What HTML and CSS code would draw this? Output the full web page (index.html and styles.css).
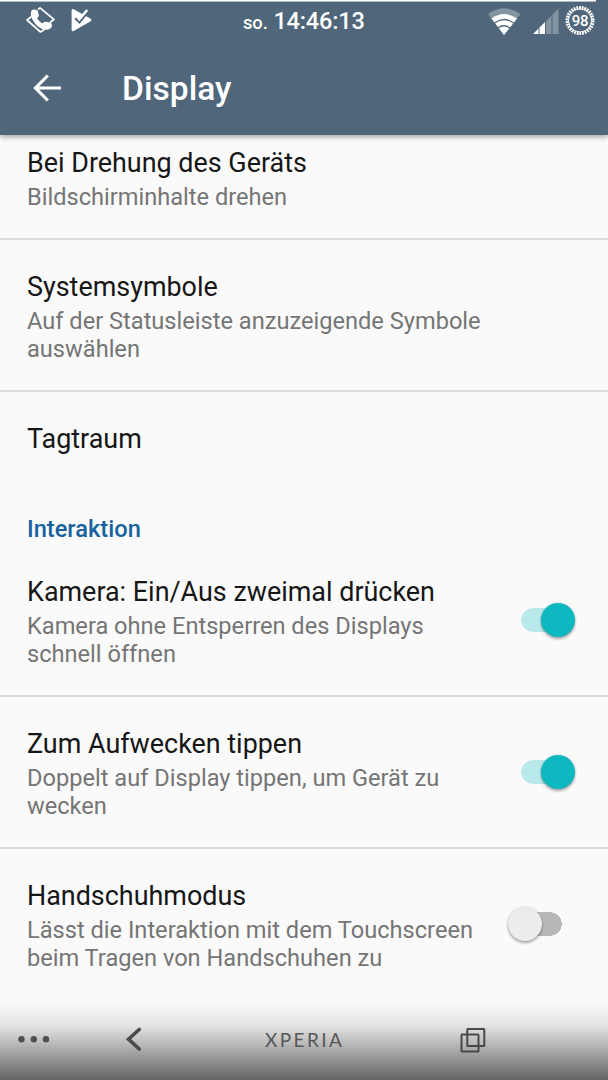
FILE: index.html
```html
<!DOCTYPE html>
<html lang="de">
<head>
<meta charset="utf-8">
<title>Display</title>
<link rel="stylesheet" href="styles.css">
</head>
<body>
<div class="screen">
  <header class="header">
    <div class="status">
      <svg class="status-left" width="110" height="42" viewBox="0 0 110 42">
        <path d="M38.500 9L40 7.800L54 19.500L50.500 22M31 17L27 20L40.500 32L44 29.800" fill="none" stroke="#fff" stroke-width="1.700" stroke-linejoin="round" stroke-linecap="round"/>
        <path d="M32 11C33.500 9.800 36.500 9.800 37.200 11.200L38.200 15.500C38.200 17 36 17.500 36.500 18.500C38 21 40 23 42.500 24C44 24 44.500 21.800 46 22.300L50 23.300C52 24 51.500 26.500 50 28C47 30 42 29 37 24.800C32 19.500 30.500 14 32 11Z" fill="#fff" stroke="#fff" stroke-width="1.300"/>
        <path d="M73 10.500L90 20L73 29.700Z" fill="#fff" stroke="#fff" stroke-width="2.800" stroke-linejoin="round"/>
        <path d="M75.200 18.300L79.500 22.300L88 11.800" fill="none" stroke="#50667a" stroke-width="2.200"/>
        <path d="M78.500 18.500L79.300 19.300L87.200 10" fill="none" stroke="#fff" stroke-width="2.600"/>
      </svg>
      <div class="clock"><span class="day">so.</span> 14:46:13</div>
      <svg class="status-right" width="138" height="42" viewBox="470 0 138 42">
        <path d="M504 35L488 14Q504 2.500 520.500 14Z" fill="#8394a2"/>
        <path d="M504 35L491.500 18.500Q504 9.500 517 18.500Z" fill="#fff"/>
        <path d="M494.500 23Q504 16 513.500 23M498 28Q504 23.500 510 28" fill="none" stroke="#50667a" stroke-width="1.300"/>
        <path d="M546 21L551.500 15.500V34H546ZM552.500 14.500L558.500 8.500V34H552.500Z" fill="#8394a2"/>
        <path d="M533 34L538.500 28.500V34ZM539.500 27.500L545 22V34H539.500Z" fill="#fff"/>
        <circle cx="580" cy="20.500" r="12.800" fill="none" stroke="#fff" stroke-width="3.400" stroke-dasharray="1.800 .88"/>
        <circle cx="580" cy="20.500" r="11.500" fill="none" stroke="#fff" stroke-width=".8"/>
        <text class="battery" x="580" y="26" text-anchor="middle">98</text>
      </svg>
    </div>
    <div class="toolbar">
      <svg class="back" width="30" height="28" viewBox="0 0 30 28" fill="none" stroke="#fff" stroke-width="3.200"><path d="M15.800 1.500L3.500 14L15.800 26.500M3.500 14H29"/></svg>
      <h1 class="title">Display</h1>
    </div>
  </header>

  <main class="list">
    <section class="row row-first">
      <div class="copy"><h2 class="name">Bei Drehung des Geräts</h2><p class="summary">Bildschirminhalte drehen</p></div>
    </section>
    <section class="row">
      <div class="copy"><h2 class="name">Systemsymbole</h2><p class="summary">Auf der Statusleiste anzuzeigende Symbole<br>auswählen</p></div>
    </section>
    <section class="row row-single">
      <div class="copy"><h2 class="name">Tagtraum</h2></div>
    </section>
    <h3 class="category">Interaktion</h3>
    <section class="row">
      <div class="copy"><h2 class="name">Kamera: Ein/Aus zweimal drücken</h2><p class="summary">Kamera ohne Entsperren des Displays<br>schnell öffnen</p></div>
      <div class="switch on"><span class="thumb"></span></div>
    </section>
    <section class="row">
      <div class="copy"><h2 class="name">Zum Aufwecken tippen</h2><p class="summary">Doppelt auf Display tippen, um Gerät zu<br>wecken</p></div>
      <div class="switch on"><span class="thumb"></span></div>
    </section>
    <section class="row row-last">
      <div class="copy"><h2 class="name">Handschuhmodus</h2><p class="summary">Lässt die Interaktion mit dem Touchscreen<br>beim Tragen von Handschuhen zu</p></div>
      <div class="switch off"><span class="thumb"></span></div>
    </section>
  </main>

  <nav class="navbar">
    <svg class="nav-icon" width="34" height="10" viewBox="0 0 34 10" fill="#505050"><circle cx="4.500" cy="4.300" r="3.200"/><circle cx="16.800" cy="4.300" r="3.200"/><circle cx="29" cy="4.300" r="3.200"/></svg>
    <svg class="nav-icon" width="18" height="26" viewBox="0 0 18 26"><path d="M15.200 2.500L4.500 12.200L15.200 22" fill="none" stroke="#4b4b4b" stroke-width="3.600" stroke-linecap="round"/></svg>
    <span class="brand">XPERIA</span>
    <svg class="nav-icon" width="26" height="26" viewBox="0 0 26 26" fill="none" stroke="#494949" stroke-width="2"><rect x="7.300" y="2" width="17" height="17" rx=".5"/><rect x="1.500" y="7.500" width="17" height="17" rx=".5"/></svg>
  </nav>
</div>
</body>
</html>
```
FILE: styles.css
```css
* { box-sizing: border-box; margin: 0; padding: 0; }
body { background: #fafafa; font-family: Roboto, "Liberation Sans", sans-serif; }
.screen { width: 608px; height: 1080px; display: flex; flex-direction: column; overflow: hidden; background: #fafafa; }
.header { height: 135px; flex: none; background: linear-gradient(#fff, #fff) 0 0 / 596px 1px no-repeat, linear-gradient(#b5bec6, #b5bec6) 0 1px / 596px 1px no-repeat, #50667a; box-shadow: 0 2px 5px rgba(0,0,0,.35); z-index: 1; color: #fff; }
.status { height: 42px; display: grid; grid-template-columns: 1fr 122px 1fr; align-items: start; }
.status-right { justify-self: end; }
.clock { padding-top: 7px; font-size: 23.640px; line-height: 28px; font-weight: 500; letter-spacing: -.2px; white-space: nowrap; }
.day { font-size: 18.400px; letter-spacing: -.1px; }
.battery { font: 500 15px Roboto, sans-serif; fill: #fff; letter-spacing: -.3px; }
.toolbar { height: 93px; display: flex; align-items: center; padding: 0 0 0 32px; }
.back { margin-right: 60px; margin-bottom: 2px; }
.title { font-size: 33.600px; font-weight: 500; line-height: 40px; padding-top: 1px; }
.list { flex: none; height: 865px; }
.row { height: 152px; padding: 29px 33px 0 27px; display: flex; justify-content: space-between; align-items: flex-start; border-bottom: 2px solid #dadada; }
.row-first { height: 105px; padding-top: 10px; }
.row-single { height: 92px; border: 0; }
.row-last { border: 0; }
.name { color: #161616; font-size: 26.920px; line-height: 36px; font-weight: 400; white-space: nowrap; }
.summary { padding-top: 3px; color: #757575; font-size: 23.620px; line-height: 27.600px; white-space: nowrap; }
.category { height: 61px; padding: 31px 27px 0; color: #17629e; font-size: 23.640px; line-height: 28px; font-weight: 500; }
.switch { width: 54px; height: 34px; margin-top: 29px; flex: none; display: flex; align-items: center; }
.switch.on { justify-content: flex-end; background: radial-gradient(circle 12px at 12px 17px, #b9e9eb 11.500px, transparent 12px), linear-gradient(#b9e9eb, #b9e9eb) 12px 5px / 28px 24px no-repeat; }
.switch.off { margin-right: 13px; background: radial-gradient(circle 12px at 42px 17px, #b8b8b8 11.500px, transparent 12px), linear-gradient(#b8b8b8, #b8b8b8) 14px 5px / 28px 24px no-repeat; }
.thumb { width: 34px; height: 34px; border-radius: 50%; background: #0db8c1; box-shadow: 0 2px 3px rgba(0,0,0,.32), 0 0 2px rgba(0,0,0,.15); }
.off .thumb { background: #ececec; }
.navbar { height: 80px; flex: none; display: grid; grid-template-columns: 107px 138px 198px 1fr; align-items: center; padding-left: 17px; background: linear-gradient(#fafafa 0, #f0f0f0 12px, #e4e4e4 25px, #c7c7c7 38px, #aaa 50px, #8b8b8b 63px, #727272 74px, #646464 80px); }
.brand { padding-left: 3px; padding-bottom: 1px; font: 400 19px Lato, sans-serif; letter-spacing: 2.400px; color: #575757; }
```
